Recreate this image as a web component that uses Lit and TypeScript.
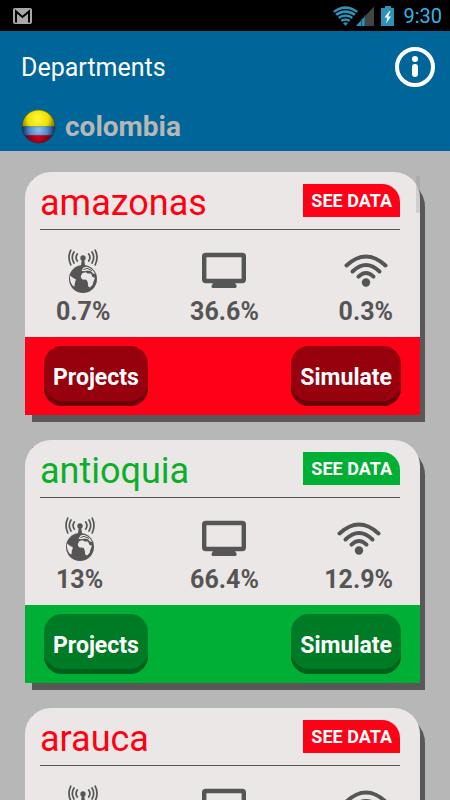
import { LitElement, html, css, svg } from "lit";
import { customElement, property } from "lit/decorators.js";

type Tone = "red" | "green";

interface Department {
  name: string;
  tone: Tone;
  phone: string;
  computer: string;
  internet: string;
}

const DEPARTMENTS: Department[] = [
  { name: "amazonas", tone: "red", phone: "0.7%", computer: "36.6%", internet: "0.3%" },
  { name: "antioquia", tone: "green", phone: "13%", computer: "66.4%", internet: "12.9%" },
  { name: "arauca", tone: "red", phone: "2.3%", computer: "42.5%", internet: "2.1%" },
];

const globeIcon = svg`
  <svg width="30" height="46" viewBox="0 0 30 46" aria-hidden="true">
    <g fill="none" stroke="#555" stroke-width="1.700" stroke-linecap="round">
      <path d="M9.300 6Q6.800 9.500 9.300 13M6 4Q2.600 9.500 6 15M2.800 2.200Q-.8 9.500 2.800 16.800"/>
      <path d="M20.700 6Q23.200 9.500 20.700 13M24 4Q27.400 9.500 24 15M27.200 2.200Q30.800 9.500 27.200 16.800"/>
    </g>
    <circle cx="15" cy="10" r="2.700" fill="#555"/>
    <path d="M14 10h2l1.200 9h-4.400z" fill="#555"/>
    <circle cx="15" cy="31" r="14" fill="#555"/>
    <path fill="#ebe7e6" d="M2.200 27.500L4.500 29.500 8 31.500 6.800 35 6.500 38.500 4.500 37.500Q1.200 33 2.200 27.500z"/>
    <path fill="#ebe7e6" d="M13 27.500L14.500 25 18 24.300 19.500 25.500 23 25.500 24.500 29 27 29.800 25.500 33.500 24.500 37 22 39.500 20.200 38.500 19.800 34.500 18.500 31.800 14.500 31.500 12.800 29.500z"/>
    <path fill="#ebe7e6" d="M13.500 22.800L15.500 19.600 18.500 18.700Q24.500 20 27.200 26L25 25.500 23 23.300 19.500 22.400 16.500 23.300z"/>
    <path d="M15.500 21.600L19 20.300 24 22.600" fill="none" stroke="#555" stroke-width="1"/>
  </svg>`;

const monitorIcon = svg`
  <svg width="46" height="46" viewBox="0 0 46 46" aria-hidden="true">
    <rect x="3.200" y="7" width="39.600" height="26" rx="1.500" fill="none" stroke="#555" stroke-width="4.400"/>
    <path d="M12.500 34h21l2 3.500q.5 2.500-1.500 2.500h-22q-2 0-1.500-2z" fill="#555"/>
  </svg>`;

const wifiIcon = svg`
  <svg width="46" height="46" viewBox="0 0 46 46" aria-hidden="true">
    <g fill="none" stroke="#555" stroke-width="4" stroke-linecap="round">
      <path d="M3.500 17.500Q23-.5 42.500 17.500"/>
      <path d="M9.500 23.500Q23 10.500 36.500 23.500"/>
      <path d="M15.500 28.700Q23 21.300 30.500 28.700"/>
    </g>
    <circle cx="23" cy="34.500" r="4.200" fill="#555"/>
  </svg>`;

@customElement("status-bar")
export class StatusBar extends LitElement {
  static styles = css`
    :host {
      display: flex;
      align-items: center;
      justify-content: space-between;
      height: 31px;
      padding: 0 8px 0 13px;
      background: #000;
      color: #33b5e5;
      font: 20px/31px Roboto, sans-serif;
      flex: none;
    }
    .tray {
      display: flex;
      align-items: center;
    }
    svg {
      display: block;
    }
    .clock {
      margin-left: 8px;
      padding-top: 2px;
    }
  `;

  render() {
    return html`
      <svg width="19" height="16" viewBox="0 0 19 16" aria-hidden="true">
        <rect width="19" height="16" rx="2" fill="#a8a8a8" />
        <path d="M3 14.500V3.500l6.500 5.500L16 3.500v11" fill="none" stroke="#000" stroke-width="2" />
      </svg>
      <div class="tray">
        <svg width="62" height="22" viewBox="0 0 62 22" aria-hidden="true">
          <path d="M0 6Q12.500-3.500 25 6L12.500 21z" fill="#2e92b8" />
          <g fill="none" stroke="#000" stroke-width="1.300">
            <path d="M1 8.800Q12.500.5 24 8.800M3 12.300Q12.500 4.800 22 12.300M5.500 15.500Q12.500 9.500 19.500 15.500M8 18.600Q12.500 14.500 17 18.600" />
          </g>
          <path d="M41 1.500V21H23z" fill="#444" />
          <path d="M32 11.200V21H23z" fill="#2e92b8" />
          <path d="M28.500 14V21M32 10V21" stroke="#1b5267" stroke-width="1" />
          <path d="M48 3h4V1h6v2h3v18H48z" fill="#2e92b8" />
          <path d="M56.500 6l-5 6.500h3l-1.500 6 5-7h-3l2.500-5.500z" fill="#fff" />
        </svg>
        <span class="clock">9:30</span>
      </div>
    `;
  }
}

@customElement("department-card")
export class DepartmentCard extends LitElement {
  @property({ attribute: false }) department!: Department;

  static styles = css`
    :host {
      display: block;
      position: relative;
      z-index: 0;
    }
    .shadow {
      position: absolute;
      z-index: -1;
      inset: 7px -5px -7px 7px;
      border-radius: 0 28px 0 0;
      background: #585858;
    }
    .card {
      border-radius: 26px 26px 0 0;
      overflow: hidden;
      background: #ebe7e6;
    }
    .red {
      --main: #ff0016;
      --name: #ff0011;
      --button: #97000d;
      --edge: #6b0009;
    }
    .green {
      --main: #00b035;
      --name: #08b028;
      --button: #007b25;
      --edge: #00601c;
    }
    .head {
      display: flex;
      align-items: center;
      justify-content: space-between;
      height: 57px;
      margin: 0 20px 0 15px;
      border-bottom: 1px solid #555;
    }
    h2 {
      margin: 0;
      color: var(--name);
      font-size: 36px;
      font-weight: 400;
      line-height: 44px;
      padding-top: 4px;
    }
    button {
      border: 0;
      color: #fff;
      font-family: inherit;
      font-weight: 700;
      cursor: pointer;
    }
    .data {
      height: 33px;
      padding: 0 8px 1px;
      border-radius: 0 18px 0 0;
      background: var(--main);
      font-size: 18px;
    }
    dl {
      display: grid;
      grid-template-columns: 1fr auto 1fr;
      margin: 0;
      padding: 18px 27px 10px 31px;
    }
    .stat {
      display: flex;
      flex-direction: column;
      align-items: center;
      justify-self: center;
      gap: 3px;
    }
    .stat:first-child {
      justify-self: start;
    }
    .stat:last-child {
      justify-self: end;
    }
    dt svg {
      display: block;
    }
    dd {
      margin: 0;
      color: #555;
      font-size: 25px;
      font-weight: 700;
      line-height: 30px;
    }
    .actions {
      display: flex;
      align-items: center;
      justify-content: space-between;
      height: 78px;
      padding: 0 19px;
      background: var(--main);
    }
    .action {
      height: 60px;
      padding: 2px 9px 0;
      border-radius: 18px;
      background: var(--button);
      box-shadow: inset 0 -5px var(--edge);
      font-size: 23px;
    }
  `;

  render() {
    const d = this.department;
    return html`
      <div class="shadow"></div>
      <article class="card ${d.tone}">
        <header class="head">
          <h2>${d.name}</h2>
          <button class="data">SEE DATA</button>
        </header>
        <dl>
          <div class="stat"><dt aria-label="Phone">${globeIcon}</dt><dd>${d.phone}</dd></div>
          <div class="stat"><dt aria-label="Computer">${monitorIcon}</dt><dd>${d.computer}</dd></div>
          <div class="stat"><dt aria-label="Internet">${wifiIcon}</dt><dd>${d.internet}</dd></div>
        </dl>
        <footer class="actions">
          <button class="action">Projects</button>
          <button class="action">Simulate</button>
        </footer>
      </article>
    `;
  }
}

@customElement("app-root")
export class AppRoot extends LitElement {
  static styles = css`
    :host {
      display: flex;
      flex-direction: column;
      height: 100vh;
      background: #b7b7b7;
      font-family: Roboto, sans-serif;
    }
    .top {
      flex: none;
      background: #006699;
      padding: 15px 14px 4px 21px;
    }
    .bar {
      display: flex;
      align-items: center;
      justify-content: space-between;
    }
    h1 {
      margin: 0;
      padding-top: 1px;
      color: #fff;
      font-size: 25px;
      font-weight: 400;
      line-height: 41px;
    }
    .info {
      padding: 0;
      border: 0;
      background: none;
      cursor: pointer;
    }
    svg {
      display: block;
    }
    .country {
      display: flex;
      align-items: center;
      gap: 9px;
      margin-top: 18px;
      color: #b7b7b7;
      font-size: 28px;
      font-weight: 700;
      line-height: 41px;
    }
    main {
      flex: 1;
      min-height: 0;
      position: relative;
    }
    .list {
      box-sizing: border-box;
      height: 100%;
      overflow-y: auto;
      scrollbar-width: none;
      display: flex;
      flex-direction: column;
      gap: 25px;
      padding: 21px 30px 25px 25px;
    }
    .thumb {
      position: absolute;
      top: 25px;
      right: 30px;
      width: 4px;
      height: 37px;
      background: rgba(150, 150, 150, 0.3);
    }
  `;

  render() {
    return html`
      <status-bar></status-bar>
      <header class="top">
        <div class="bar">
          <h1>Departments</h1>
          <button class="info" aria-label="Information">
            <svg width="42" height="42" viewBox="0 0 42 42">
              <circle cx="21" cy="21" r="18" fill="none" stroke="#fff" stroke-width="4" />
              <circle cx="21" cy="13" r="3" fill="#fff" />
              <rect x="18" y="18" width="6" height="13" rx="3" fill="#fff" />
            </svg>
          </button>
        </div>
        <div class="country">
          <svg width="35" height="35" viewBox="0 0 35 35" aria-hidden="true">
            <defs>
              <clipPath id="disc"><circle cx="17.500" cy="17.500" r="16.700" /></clipPath>
              <radialGradient id="yellow" cx="17" cy="10" r="17" gradientUnits="userSpaceOnUse">
                <stop offset="0" stop-color="#fff83a" />
                <stop offset=".6" stop-color="#f0e000" />
                <stop offset="1" stop-color="#8a7a00" />
              </radialGradient>
              <radialGradient id="blue" cx="17.500" cy="21" r="17" gradientUnits="userSpaceOnUse">
                <stop offset="0" stop-color="#8fc0ec" />
                <stop offset=".55" stop-color="#4f86c6" />
                <stop offset="1" stop-color="#0b2560" />
              </radialGradient>
              <radialGradient id="crimson" cx="17.500" cy="26" r="15" gradientUnits="userSpaceOnUse">
                <stop offset="0" stop-color="#e0001c" />
                <stop offset="1" stop-color="#600010" />
              </radialGradient>
            </defs>
            <g clip-path="url(#disc)">
              <rect width="35" height="17.500" fill="url(#yellow)" />
              <rect y="17.500" width="35" height="9" fill="url(#blue)" />
              <rect y="26.300" width="35" height="9" fill="url(#crimson)" />
            </g>
            <circle cx="17.500" cy="17.500" r="16.500" fill="none" stroke="#1d3a3c" stroke-opacity=".6" />
          </svg>
          <span>colombia</span>
        </div>
      </header>
      <main>
        <div class="list">
          ${DEPARTMENTS.map((d) => html`<department-card .department=${d}></department-card>`)}
        </div>
        <div class="thumb"></div>
      </main>
    `;
  }
}
